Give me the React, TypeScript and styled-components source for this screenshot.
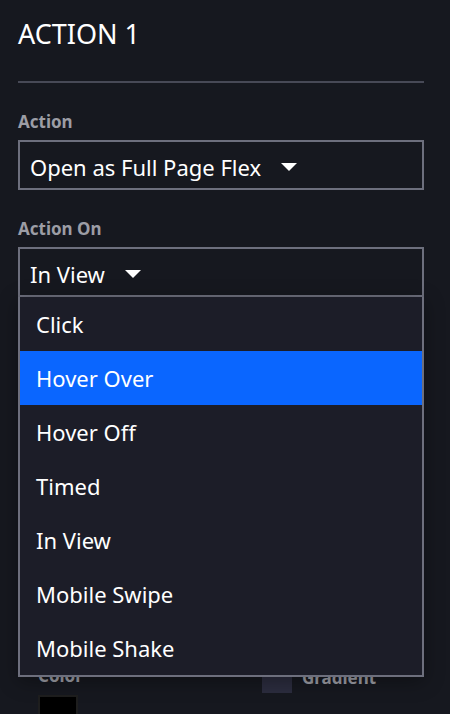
import React from 'react';
import styled, { createGlobalStyle } from 'styled-components';

/* ───────────────────────────
   Global
   ─────────────────────────── */
const GlobalStyle = createGlobalStyle`
  html, body {
    margin: 0;
    padding: 0;
    background: #16181f;
  }
  body {
    font-family: 'Noto Sans', 'Open Sans', sans-serif;
    color: #ffffff;
    overflow: hidden;
  }
`;

/* ───────────────────────────
   Panel
   ─────────────────────────── */
const Panel = styled.div`
  width: 450px;
  height: 714px;
  box-sizing: border-box;
  padding: 14px 26px 0 18px;
  background: #16181f;
  overflow: hidden;
`;

const Title = styled.h2`
  margin: 0;
  font-size: 27px;
  font-weight: 400;
  line-height: 40px;
  color: #ffffff;
`;

const Divider = styled.hr`
  margin: 27px 0 0;
  border: none;
  height: 2px;
  background: #474956;
`;

/* ───────────────────────────
   Fields
   ─────────────────────────── */
const Field = styled.div<{ $top: number }>`
  margin-top: ${(p) => p.$top}px;
  position: relative;
`;

const Label = styled.div`
  font-size: 17px;
  font-weight: 700;
  line-height: 22px;
  color: #9c9da5;
  margin-bottom: 7px;
`;

const SelectBox = styled.div`
  height: 50px;
  box-sizing: border-box;
  border: 2px solid #6d6f7d;
  background: #16181f;
  display: flex;
  align-items: center;
  gap: 20px;
  padding: 3px 0 0 10px;
  font-size: 22px;
  color: #ffffff;
`;

const Caret = styled.span`
  width: 0;
  height: 0;
  border-left: 8px solid transparent;
  border-right: 8px solid transparent;
  border-top: 8px solid #ffffff;
  margin-top: 1px;
`;

/* ───────────────────────────
   Dropdown menu (overlay)
   ─────────────────────────── */
const Menu = styled.ul`
  position: absolute;
  left: 0;
  right: 0;
  top: 79px;
  margin: 0;
  padding: 0;
  list-style: none;
  background: #1c1d28;
  border: 2px solid #6d6f7d;
  border-top: none;
  box-shadow: 0 4px 18px rgba(0, 0, 0, 0.35);
  z-index: 5;
`;

const MenuItem = styled.li<{ $active?: boolean }>`
  height: 54px;
  display: flex;
  align-items: center;
  padding-left: 16px;
  font-size: 22px;
  color: #ffffff;
  background: ${(p) => (p.$active ? '#0a66ff' : 'transparent')};
`;

/* ───────────────────────────
   Color row (behind the menu)
   ─────────────────────────── */
const ColorRow = styled.div`
  margin-top: 369px;
  padding-left: 20px;
  display: grid;
  grid-template-columns: 224px 1fr;
  align-items: start;
`;

const ColorCol = styled.div`
  display: flex;
  flex-direction: column;
  gap: 9px;
`;

const SmallLabel = styled.span`
  font-size: 17px;
  font-weight: 700;
  line-height: 20px;
  color: #9c9da5;
`;

const Swatch = styled.div<{ $color: string }>`
  width: 40px;
  height: 40px;
  box-sizing: border-box;
  border: 2px solid #1e1e1e;
  background: ${(p) => p.$color};
`;

const CheckRow = styled.label`
  display: flex;
  align-items: center;
  gap: 10px;
  margin-top: -3px;
`;

const CheckBox = styled.span`
  width: 30px;
  height: 30px;
  background: #2b2c3e;
`;

const options = ['Click', 'Hover Over', 'Hover Off', 'Timed', 'In View', 'Mobile Swipe', 'Mobile Shake'];

const App: React.FC = () => {
  return (
    <>
      <GlobalStyle />
      <Panel>
        <Title>ACTION 1</Title>
        <Divider />

        <Field $top={28}>
          <Label>Action</Label>
          <SelectBox>
            Open as Full Page Flex
            <Caret />
          </SelectBox>
        </Field>

        <Field $top={28}>
          <Label>Action On</Label>
          <SelectBox>
            In View
            <Caret />
          </SelectBox>
          <Menu>
            {options.map((o) => (
              <MenuItem key={o} $active={o === 'Hover Over'}>
                {o}
              </MenuItem>
            ))}
          </Menu>
        </Field>

        <ColorRow>
          <ColorCol>
            <SmallLabel>Color</SmallLabel>
            <Swatch $color="#000000" />
          </ColorCol>
          <CheckRow>
            <CheckBox />
            <SmallLabel>Gradient</SmallLabel>
          </CheckRow>
        </ColorRow>
      </Panel>
    </>
  );
};

export default App;
